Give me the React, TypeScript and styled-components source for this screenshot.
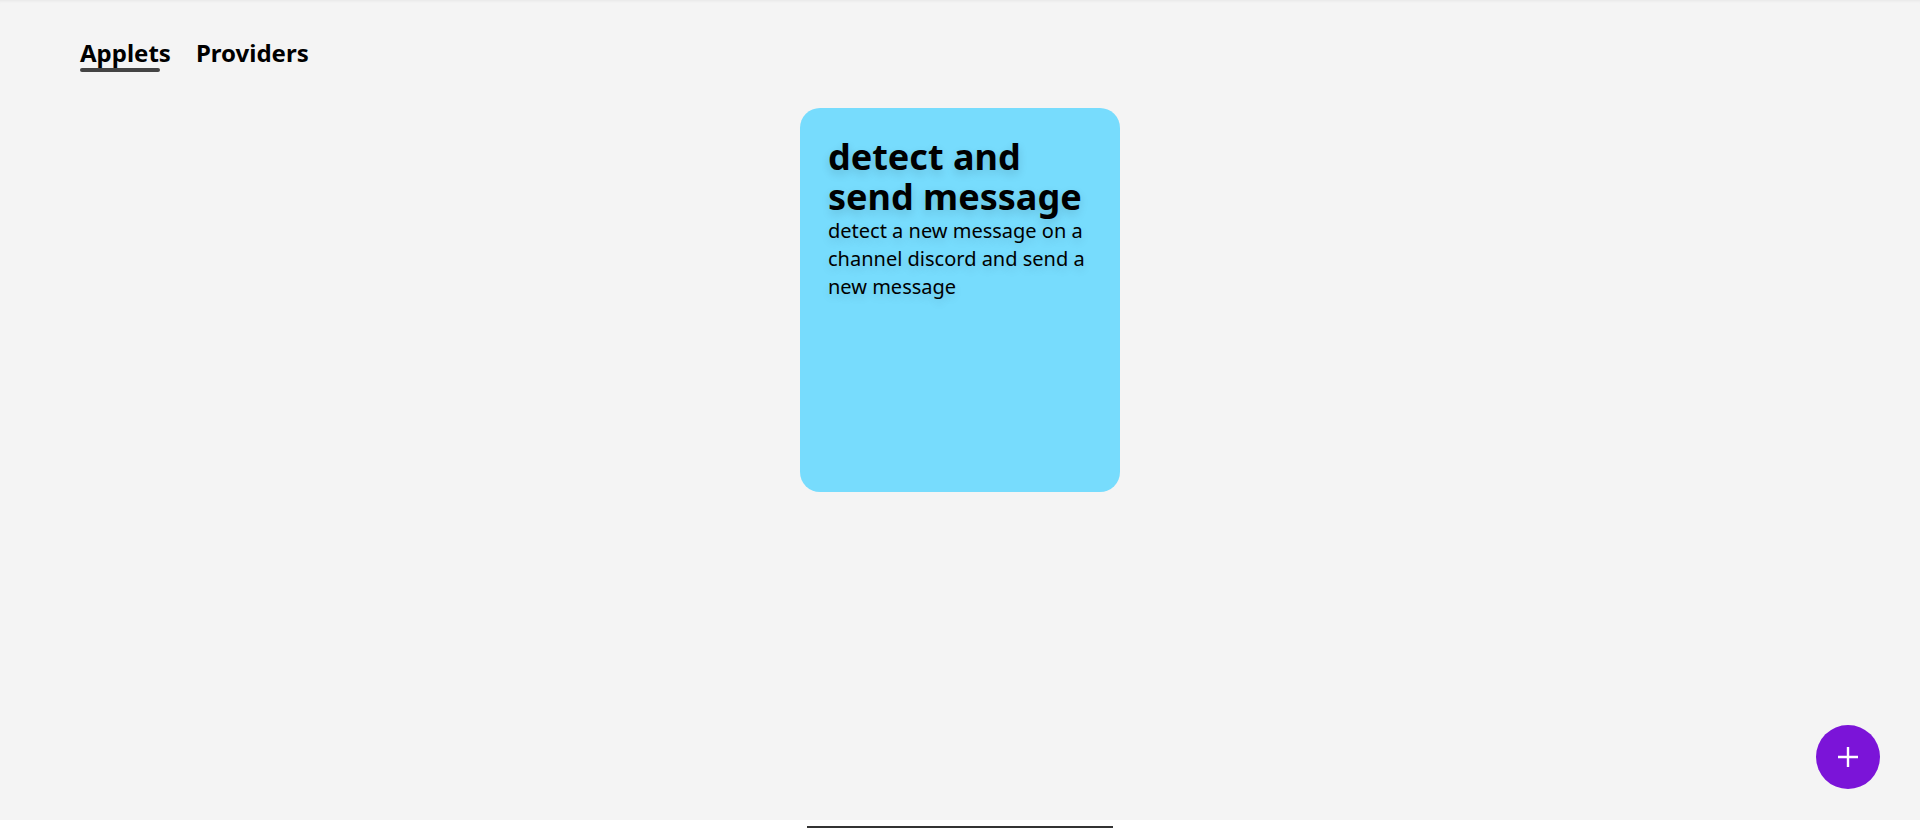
import React from "react";
import styled, { createGlobalStyle } from "styled-components";

const Global = createGlobalStyle`
  html, body { margin: 0; padding: 0; background: #ffffff; }
  body { font-family: "Noto Sans", "Open Sans", sans-serif; color: #000; }
  * { box-sizing: border-box; }
`;

const Page = styled.main`
  height: 820px;
  background: #f4f4f4;
  box-shadow: inset 0 3px 3px -2px rgba(0, 0, 0, 0.06);
  padding: 36px 80px 0;
  display: flex;
  flex-direction: column;
`;

const Tabs = styled.nav`
  display: flex;
  gap: 25px;
  height: 72px;
`;

const Tab = styled.button<{ $active?: boolean }>`
  position: relative;
  background: none;
  border: none;
  padding: 0;
  height: 34px;
  font-family: inherit;
  font-size: 24px;
  font-weight: 700;
  color: #000;
  cursor: pointer;
  line-height: 34px;
  &::after {
    content: "";
    display: ${(p) => (p.$active ? "block" : "none")};
    position: absolute;
    left: 0;
    top: 32px;
    width: 80px;
    height: 4px;
    border-radius: 2px;
    background: #444444;
  }
`;

const Grid = styled.section`
  display: flex;
  justify-content: center;
`;

const Card = styled.article`
  width: 320px;
  height: 384px;
  background: #77dcfd;
  border-radius: 20px;
  padding: 29px 28px;
  display: flex;
  flex-direction: column;
`;

const Title = styled.h2`
  margin: 0;
  font-size: 36px;
  line-height: 40px;
  font-weight: 700;
  text-shadow: 0 4px 10px rgba(0, 0, 0, 0.14);
`;

const Desc = styled.p`
  margin: 0;
  font-size: 20px;
  line-height: 28px;
  text-shadow: 0 4px 10px rgba(0, 0, 0, 0.12);
`;

const Fab = styled.button`
  position: fixed;
  right: 40px;
  bottom: 39px;
  width: 64px;
  height: 64px;
  border-radius: 50%;
  border: none;
  background: #7b14d8;
  display: flex;
  align-items: center;
  justify-content: center;
  cursor: pointer;
`;

const Footer = styled.div`
  height: 8px;
  display: flex;
  justify-content: center;
  align-items: flex-end;
`;

const Bar = styled.div`
  width: 306px;
  height: 2px;
  background: #333333;
`;

export default function App() {
  return (
    <>
      <Global />
      <Page>
        <Tabs>
          <Tab $active>Applets</Tab>
          <Tab>Providers</Tab>
        </Tabs>
        <Grid>
          <Card>
            <Title>detect and send message</Title>
            <Desc>detect a new message on a channel discord and send a new message</Desc>
          </Card>
        </Grid>
      </Page>
      <Footer>
        <Bar />
      </Footer>
      <Fab aria-label="add">
        <svg width="22" height="22" viewBox="0 0 22 22">
          <path d="M11 1v20M1 11h20" stroke="#fff" strokeWidth="2.4" />
        </svg>
      </Fab>
    </>
  );
}
